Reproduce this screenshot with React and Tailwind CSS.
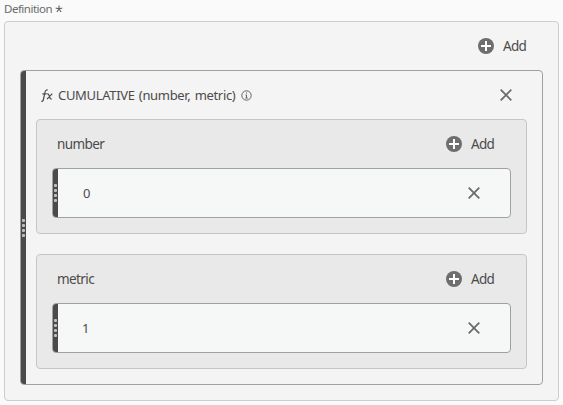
import React from 'react';

function Grip() {
  return (
    <div className="flex w-[5px] shrink-0 flex-col items-center justify-center gap-0.5 bg-[#4a4a4a]">
      {[0, 1, 2, 3].map((i) => (
        <span key={i} className="size-[3px] rounded-[1px] bg-[#c0c0c0]" />
      ))}
    </div>
  );
}

function AddButton() {
  return (
    <button className="flex h-5 items-center gap-[9px] text-[13.5px] leading-5 tracking-[-0.7px]">
      <svg width="16" height="16" viewBox="0 0 16 16">
        <circle cx="8" cy="8" r="8" fill="#6e6e6e" />
        <path d="M8 3v10M3 8h10" stroke="#fff" strokeWidth="2" />
      </svg>
      <span className="w-[23px]">Add</span>
    </button>
  );
}

function Close() {
  return (
    <button className="block size-3">
      <svg width="12" height="12" viewBox="0 0 12 12">
        <path d="M.7.7l10.6 10.6M11.3.7L.7 11.3" stroke="#6b6b6b" strokeWidth="1.8" />
      </svg>
    </button>
  );
}

function Argument({ name, value }) {
  return (
    <section className="h-[115px] rounded-[4px] border border-[#c6c6c6] bg-[#e9e9e9] px-[15px]">
      <div className="flex h-12 items-center justify-between pl-[5px] pr-[17px]">
        <span className="text-[13.5px] leading-5 tracking-[-0.6px]">{name}</span>
        <AddButton />
      </div>
      <div className="flex h-[50px] overflow-hidden rounded-[4px] border border-[#a0a0a0] bg-[#f6f8f7]">
        <Grip />
        <div className="flex flex-1 items-center justify-between pl-[25px] pr-[30px] text-[13px] leading-5">
          <span className={value === '1' ? '-ml-px' : ''}>{value}</span>
          <Close />
        </div>
      </div>
    </section>
  );
}

export default function App() {
  return (
    <main className="h-[405px] w-[563px] overflow-hidden bg-[#fafafa] pl-1 font-['Noto_Sans',sans-serif] text-[#4b4b4b]">
      <div className="flex h-[21px] items-start gap-1 pt-px text-[11.5px] leading-4 tracking-[-0.5px] text-[#6a6a6a]">
        <span className="w-[47px] whitespace-nowrap">Definition</span>
        <svg className="mt-[4px]" width="8" height="8" viewBox="0 0 8 8">
          <path d="M4 4V.5M4 4l3.3-1M4 4l2.1 3M4 4L1.9 7M4 4L.7 3" stroke="#606060" strokeWidth="1.15" />
        </svg>
      </div>
      <div className="h-[380px] w-[555px] rounded-[4px] border border-[#cdcdcd] bg-[#f4f4f4] px-[15px]">
        <div className="flex h-12 items-center justify-end pr-[17px]">
          <AddButton />
        </div>
        <div className="flex h-[315px] overflow-hidden rounded-[4px] border border-[#a0a0a0]">
          <Grip />
          <div className="flex-1 pl-2.5 pr-[15px]">
            <header className="flex h-12 items-center pl-[5px] pr-[15px]">
              <svg width="12" height="15" viewBox="0 0 12 15" fill="none" stroke="#4b4b4b" strokeWidth="1.2">
                <path d="M.3 13.3c1.3.3 1.8-.4 2.1-1.8L4 4.2C4.3 2.5 5.2 1.7 6.7 2M1.4 5.8h4.3M6.2 5.8c1.2-.2 1.5.4 1.9 1.7l.8 2.3c.3 1 .8 1.3 1.8 1.1M11.3 5.7L6 11.2" />
              </svg>
              <span className="ml-[5px] w-[178px] whitespace-nowrap text-[13px] leading-5 tracking-[-0.33px] [word-spacing:1.2px]">CUMULATIVE (number, metric)</span>
              <svg className="ml-[5px]" width="11" height="11" viewBox="0 0 11 11" fill="none" stroke="#626262">
                <circle cx="5.5" cy="5.5" r="4.7" strokeWidth="1" />
                <path d="M5.5 2.5v1.2M4.5 5h1v2.9M4.3 8h2.5" strokeWidth="1" />
              </svg>
              <div className="ml-auto"><Close /></div>
            </header>
            <div className="flex flex-col gap-5">
              <Argument name="number" value="0" />
              <Argument name="metric" value="1" />
            </div>
          </div>
        </div>
      </div>
    </main>
  );
}
